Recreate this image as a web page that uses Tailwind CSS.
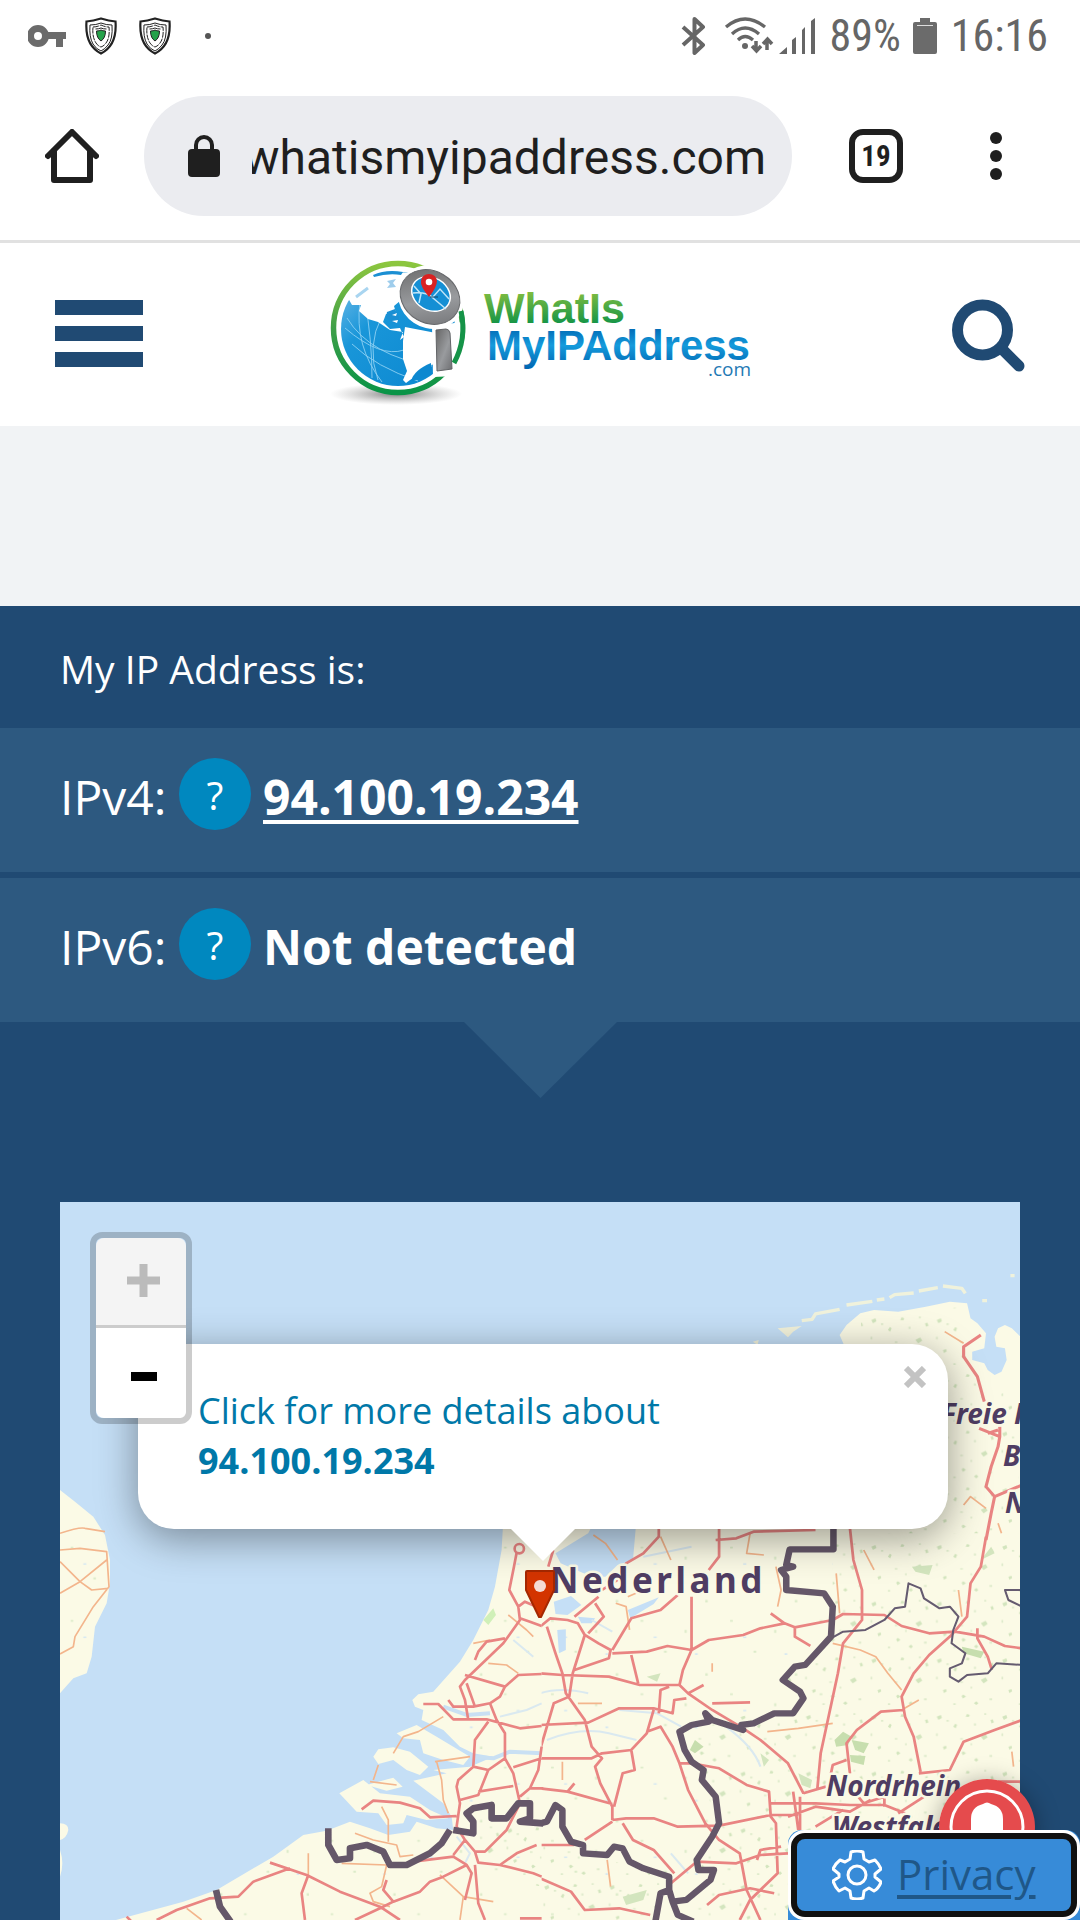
<!DOCTYPE html>
<html lang="en">
<head>
<meta charset="utf-8">
<meta name="viewport" content="width=device-width, initial-scale=1">
<title>What Is My IP Address</title>
<script src="https://cdn.jsdelivr.net/npm/@tailwindcss/browser@4"></script>
</head>
<body class="bg-white font-['Open_Sans',sans-serif]">
<div class="flex min-h-screen flex-col">

  <!-- Phone status bar -->
  <div class="flex h-[72px] items-center justify-between pr-8 pl-7 text-[#666666]">
    <div class="flex items-center">
      <svg class="mr-[18px] h-[24px] w-[39px]" viewBox="0 0 39 24" fill="#6b6b6b" aria-label="VPN key"><path fill-rule="evenodd" d="M10 1a11 11 0 1 1 0 22a11 11 0 1 1 0-22ZM10 8a4 4 0 1 0 0 8a4 4 0 1 0 0-8Z"/><path d="M18 8h20v7h-3v8h-7v-8H18Z"/></svg>
      <svg class="mr-[22px] h-[38px] w-[32px]" viewBox="0 0 32 38" fill="none" stroke="#222" aria-label="Shield"><path stroke-width="2.2" d="M1.500 4.500C7 4 11 3 16 1.500C21 3 25 4 30.500 4.500C31.500 18 29 30 16 36.500C3 30 .5 18 1.500 4.500Z"/><path stroke-width="1" d="M5 8q6 0 11-2q5 2 11 2q1 14-4 20q-3 4-7 6q-5-2-8-7q-4-7-3-19"/><path stroke-width="1" stroke-dasharray="6 1" d="M8 10q4 0 8-2q4 2 8 2q1 11-3 16q-2 3-5 4q-3-1-5-4q-4-6-3-16"/><path stroke-width="1" d="M10.500 12q3 0 5.500-1q2 1 5.500 1"/><path fill="#25a24a" d="M11.500 14q3 0 4.500-1q1.500 1 4.500 1q0 7-4.500 10q-4.500-3-4.500-10Z"/></svg>
      <svg class="mr-[34px] h-[38px] w-[32px]" viewBox="0 0 32 38" fill="none" stroke="#222" aria-label="Shield"><path stroke-width="2.2" d="M1.500 4.500C7 4 11 3 16 1.500C21 3 25 4 30.500 4.500C31.500 18 29 30 16 36.500C3 30 .5 18 1.500 4.500Z"/><path stroke-width="1" d="M5 8q6 0 11-2q5 2 11 2q1 14-4 20q-3 4-7 6q-5-2-8-7q-4-7-3-19"/><path stroke-width="1" stroke-dasharray="6 1" d="M8 10q4 0 8-2q4 2 8 2q1 11-3 16q-2 3-5 4q-3-1-5-4q-4-6-3-16"/><path stroke-width="1" d="M10.500 12q3 0 5.500-1q2 1 5.500 1"/><path fill="#25a24a" d="M11.500 14q3 0 4.500-1q1.500 1 4.500 1q0 7-4.500 10q-4.500-3-4.500-10Z"/></svg>
      <span class="size-[6px] rounded-full bg-[#555]"></span>
    </div>
    <div class="flex items-center font-['Roboto_Condensed','Liberation_Sans_Narrow',Roboto,sans-serif] text-[44px] leading-none">
      <svg class="mr-[18px] h-[38px] w-[25px]" viewBox="0 0 25 38" fill="none" stroke="currentColor" stroke-width="4" stroke-linejoin="round" aria-label="Bluetooth"><path d="M2 10L22 28L13.500 36V2L22 10L2 28"/></svg>
      <svg class="mr-[5px] h-[38px] w-[50px]" viewBox="0 0 50 38" fill="none" stroke="currentColor" stroke-width="3.300" aria-label="Wi-Fi"><path d="M2 10Q21-6 41 10M8 17Q21 5 35 17M14 23Q21 16 29 23"/><circle cx="21" cy="29" r="3" fill="currentColor" stroke="none"/><path stroke-width="3.500" d="M32 24v9M28 29l4.500 5l4.500-5M43 33V23M39 27l4.500-5l4.500 5"/></svg>
      <svg class="mr-[14px] h-[38px] w-[37px]" viewBox="0 0 37 38" fill="currentColor" aria-label="Signal"><path d="M0 37L8 30V37ZM13 23L17 20V37H13ZM23 13L26 10V37H23ZM32 4L36 1V37H32Z"/></svg>
      <span class="mr-3">89%</span>
      <svg class="mr-[14px] h-[36px] w-[24px]" viewBox="0 0 24 36" fill="#6b6b6b" aria-label="Battery"><path d="M7 0H17V4H22Q24 4 24 6V34Q24 36 22 36H2Q0 36 0 34V6Q0 4 2 4H7Z"/><path d="M4 7.500H20" stroke="#ddd"/></svg>
      <span>16:16</span>
    </div>
  </div>

  <!-- Browser toolbar -->
  <div class="flex h-[171px] items-start border-b-[3px] border-[#e1e1e1] pl-[45px] text-[#1f1f1f]">
    <button type="button" aria-label="Home" class="mt-[57px] mr-[45px]">
      <svg class="h-[54px] w-[54px]" viewBox="0 0 54 54" fill="none" stroke="currentColor" stroke-width="6" stroke-linecap="round" stroke-linejoin="round"><path d="M3 27L27 3L51 27"/><path d="M9 22V51H45V22"/></svg>
    </button>
    <div class="mt-6 flex h-[120px] min-w-0 flex-1 items-center rounded-full bg-[#ebecf0] pr-[26px] pl-11">
      <svg class="mr-8 h-[42px] w-8 shrink-0" viewBox="0 0 32 42" aria-label="Secure"><rect y="14" width="32" height="28" rx="4" fill="currentColor"/><path d="M8 16V10a8 8 0 0 1 16 0V16" fill="none" stroke="currentColor" stroke-width="4"/></svg>
      <input dir="rtl" type="text" aria-label="Address" value="whatismyipaddress.com" class="min-w-0 flex-1 bg-transparent pt-1 font-[Roboto,sans-serif] text-[48px] leading-[56px]">
    </div>
    <button type="button" aria-label="Open tabs" class="mt-[57px] ml-[57px] flex size-[54px] items-center justify-center rounded-[14px] border-[6px] border-[#1f1f1f] font-['Roboto_Condensed','Liberation_Sans_Narrow',Roboto,sans-serif] text-[29px] leading-none font-bold">19</button>
    <button type="button" aria-label="Menu" class="mt-[57px] mr-[57px] ml-[66px] flex h-[54px] w-[54px] items-center justify-center">
      <svg class="h-12 w-3" viewBox="0 0 12 48" fill="currentColor"><circle cx="6" cy="6" r="6"/><circle cx="6" cy="24" r="6"/><circle cx="6" cy="42" r="6"/></svg>
    </button>
  </div>

  <!-- Site header -->
  <header class="flex h-[183px] items-start justify-between px-[55px]">
    <button type="button" aria-label="Open navigation" class="mt-[57px] flex w-[88px] flex-col gap-[11px]">
      <span class="h-[15px] w-full bg-[#204a73]"></span><span class="h-[15px] w-full bg-[#204a73]"></span><span class="h-[15px] w-full bg-[#204a73]"></span>
    </button>
    <a href="#" aria-label="WhatIsMyIPAddress.com" class="mt-[7px] block">
      <svg class="h-[160px] w-[440px]" viewBox="0 0 440 160">
        <defs>
          <linearGradient id="ring" x1="0" y1="0" x2="0" y2="1"><stop offset="0" stop-color="#8cc63f"/><stop offset=".5" stop-color="#3f9f48"/><stop offset="1" stop-color="#0a9447"/></linearGradient>
          <linearGradient id="sea" x1="0" y1="0" x2="1" y2="1"><stop offset="0" stop-color="#7cc0ea"/><stop offset=".35" stop-color="#1996d9"/><stop offset="1" stop-color="#0a86cf"/></linearGradient>
          <linearGradient id="steel" x1="0" y1="0" x2="1" y2="1"><stop offset="0" stop-color="#666"/><stop offset=".55" stop-color="#999b9e"/><stop offset="1" stop-color="#6d6e71"/></linearGradient>
          <linearGradient id="green" gradientUnits="userSpaceOnUse" x1="0" y1="40" x2="0" y2="75"><stop offset="0" stop-color="#86bf40"/><stop offset="1" stop-color="#109347"/></linearGradient>
          <linearGradient id="blue" gradientUnits="userSpaceOnUse" x1="0" y1="77" x2="0" y2="118"><stop offset="0" stop-color="#0068b3"/><stop offset=".45" stop-color="#159bdc"/><stop offset="1" stop-color="#0067b2"/></linearGradient>
          <radialGradient id="shade"><stop offset="0" stop-color="#555" stop-opacity=".75"/><stop offset="1" stop-color="#999" stop-opacity="0"/></radialGradient>
        </defs>
        <ellipse cx="76" cy="144" rx="66" ry="11" fill="url(#shade)"/>
        <circle cx="78" cy="78" r="66" fill="#fff"/>
        <circle cx="78" cy="78" r="64.500" fill="none" stroke="url(#ring)" stroke-width="5.500"/>
        <circle cx="78" cy="79" r="57" fill="url(#sea)"/>
        <path fill="none" stroke="#8dd0f3" stroke-width=".9" d="M27 68Q50 106 112 116M40 52Q34 96 62 132M32 94Q56 117 98 131M45 51Q52 90 52 128M25 78Q60 108 84 100M62 66Q46 96 58 130"/>
        <path fill="#fff" d="M28 48Q35 26 66 21L98 24Q89 38 80 51L74 56L76 63L66 64L63 72L70 79L80 78L84 87L80 90L83 82L70 80L58 72L48 69L39 61L41 55L32 55Z"/>
        <path fill="#1b8fd3" d="M53 25Q66 19 83 22L81 25Q68 23 54 27Z"/>
        <path fill="#9fcdec" d="M67 31L76 29L73 33L76 37L67 38L70 34Z"/>
        <path fill="#1b8fd3" d="M67 62L75 59L79 68L75 74L66 68Z"/>
        <path fill="#fff" d="M72 65L77 63L76 66ZM72 71L78 70L77 73Z"/>
        <path fill="#fff" d="M85 77L111 82L127 86L124 112L111 115L101 123L90 130L86 133L83 130L87 121L83 109L83 91Z"/>
        <path fill="none" stroke="#a9d5f0" stroke-width="3" d="M36 47L48 38"/>
        <path fill="#0d88d0" d="M91 131Q94 120 111 113V124Q102 129 91 131Z"/>
        <ellipse cx="111" cy="47" rx="34" ry="31" transform="rotate(34 111 47)" fill="#fff"/>
        <path fill="#fff" d="M112 76L142 72L147 108L137 126L113 127Z"/>
        <path fill="none" stroke="#159348" stroke-width="5" d="M141 61Q147 89 134 113"/>
        <ellipse cx="110" cy="47" rx="31" ry="26" transform="rotate(30 110 47)" fill="url(#steel)" stroke="#66686b"/>
        <ellipse cx="111" cy="44" rx="21" ry="17" transform="rotate(30 111 44)" fill="#fff"/>
        <ellipse cx="111" cy="44" rx="19.500" ry="15.500" transform="rotate(30 111 44)" fill="#158fd4"/>
        <path fill="none" stroke="#bfe4f7" stroke-width="1.500" d="M93 43Q108 42 113 48L126 59M94 36L101 44L99 53M112 48L120 39L129 49"/>
        <path stroke="#124b70" stroke-width="1" d="M110 47H118"/>
        <path fill="#d92222" d="M109 47Q100 36 101 31A8 7 0 0 1 117 31Q117 37 109 47Z"/><circle cx="109" cy="32" r="3.300" fill="#fff"/>
        <path fill="url(#steel)" stroke="#626467" d="M116 80L126 79Q129 79 130 83L132 119L117 121Z"/>
        <text x="164" y="73" class="font-['Liberation_Sans',sans-serif] text-[43px] font-bold" fill="url(#green)">WhatIs</text>
        <text x="167" y="110" class="font-['Liberation_Sans',sans-serif] text-[42px] font-bold" fill="url(#blue)">MyIPAddress</text>
        <text x="388" y="126" class="font-['Open_Sans',sans-serif] text-[19px]" fill="#1f7ab5">.com</text>
      </svg>
    </a>
    <button type="button" aria-label="Search" class="mt-[56px] flex w-[88px] justify-end">
      <svg class="h-[74px] w-[73px]" viewBox="0 0 73 74" fill="none" stroke="#204a73" stroke-width="11"><circle cx="30.500" cy="31" r="25"/><path stroke-linecap="round" d="M50 50L67 67"/></svg>
    </button>
  </header>

  <div class="h-[180px] bg-[#f1f3f5]"></div>

  <main class="flex flex-1 flex-col bg-[#204a73] text-white">
    <h1 class="h-[122px] pl-[60px] text-[39px] leading-[126px]">My IP Address is:</h1>
    <div class="flex h-[144px] items-center bg-[#2d5980] px-[60px] pb-[6px] text-[48px] leading-[60px]">
      <span class="w-[119px] whitespace-nowrap">IPv4:</span>
      <button type="button" aria-label="About IPv4" class="mb-[6px] flex size-[72px] items-center justify-center rounded-full bg-[#0088bf] text-[39px] leading-none">?</button>
      <a href="#" class="ml-3 font-bold underline decoration-4 underline-offset-[5px]">94.100.19.234</a>
    </div>
    <div class="mt-1.5 flex h-[144px] items-center bg-[#2d5980] px-[60px] pb-[6px] text-[48px] leading-[60px]">
      <span class="w-[119px] whitespace-nowrap">IPv6:</span>
      <button type="button" aria-label="About IPv6" class="mb-[6px] flex size-[72px] items-center justify-center rounded-full bg-[#0088bf] text-[39px] leading-none">?</button>
      <span class="ml-3 font-bold">Not detected</span>
    </div>
    <svg class="mb-[104px] h-[76px] w-[153px] self-center" viewBox="0 0 153 76"><path d="M0 0H153L76.500 76Z" fill="#2d5980"/></svg>

    <!-- Map -->
    <section aria-label="Map" class="relative mx-[60px] min-h-[718px] flex-1 overflow-hidden bg-[#c5dff6]">
      <svg class="absolute inset-0 h-full w-full" viewBox="0 0 960 718" preserveAspectRatio="xMidYMin slice" fill="none" stroke-linejoin="round">
        <defs>
          <pattern id="woods" width="190" height="170" patternUnits="userSpaceOnUse"><path fill="#d3e5be" d="M12 20l12-5l3 9l-10 6ZM60 50l6-9l5 4l-4 10ZM100 12l8 3l-3 6l-9-1ZM140 80l14-8l6 10l-12 8ZM30 110l9-3l2 7l-8 5ZM84 128l5-4l8 6l-9 6ZM168 30l7-2l3 9l-7 3ZM120 150l7-6l6 6l-6 5Z"/><path fill="#dfebcc" d="M40 30h7v5h-7ZM80 84h8v5h-8ZM120 40h6v7h-6ZM165 135h8v6h-8ZM10 70h5v8h-5ZM60 150h7v5h-7ZM110 100h5v6h-5ZM150 10h6v5h-6Z"/></pattern>
          <pattern id="fields" width="260" height="220" patternUnits="userSpaceOnUse"><path fill="#dcebc9" d="M32 20h8v5h-8ZM160 50h6v9h-6ZM100 112h8v6h-8ZM220 180h7v7h-7Z"/><path fill="#d6e8f2" d="M70 70h9v4h-9ZM190 120h8v5h-8Z"/></pattern>
        </defs>

        <!-- East and south-east mainland -->
        <g transform="translate(480 338) scale(.3444 .3333)">
          <path fill="#fbfae6" d="M-5-60H1400V1150H-5Z"/>
          <path fill="url(#fields)" d="M0 0H850V500L400 600L520 850L400 1150H0Z"/>
          <path fill="url(#woods)" d="M850 0H1400V1150H400L520 850L410 580L760 480L700 420L850 290ZM0 900L370 1010V1150H0Z"/>
          <path fill="#c5dff6" d="M45 40L140-20L160-60H280L270 60L225 75L190 110L150 110L60 70ZM40 185L90 168L120 195L80 225L45 222ZM255 210L345 172L330 192L262 235ZM50 270L75 268V330L55 340ZM110 230L160 235L150 250L120 250Z"/>
          <path stroke="#dae9f0" stroke-width="6" d="M0 460Q60 440 140 460M230 510L340 520L410 560M20 600Q120 560 200 580L280 600M540 560Q620 620 640 680M150 240L210 275M300 50L440 20M380 940L430 1000"/>
          <path fill="#c7deae" d="M855 600L880 575L905 590L895 615L860 620ZM905 600L955 610L940 640L915 630ZM900 645L945 648L940 675L903 665ZM1225 320L1290 335L1280 355L1230 340ZM450 600L475 620L450 640L435 630Z"/>
          <path fill="#d3e5be" d="M750 700L790 720L785 745L760 735ZM640 640L665 660L650 680ZM240 1070L310 1050L300 1080L250 1095ZM1080 80L1140 75L1130 105L1090 95ZM1280 60L1310 20L1320 40ZM310 410L350 400L340 425Z"/>
          <g stroke="#f3b58c" stroke-width="5"><path d="M660 575L750 565L850 550M850 310L930 330L975 350L1010 400L1050 450M685 80L700 150L690 200M155-15L190 10L225 60M350-10L380 60M610-20L600 40L650 45M220 190L250 200L260 270M500 370V395M860 100L870 220M940 30L970 90M65 665V720M1370 635L1375 680M195 960L205 1040M110 490H180M255 170L300 150M1215 150L1225 230M1050 510L1100 480"/></g>
          <g stroke="#e98482" stroke-width="8"><path d="M900-35L910 60L935 150V240L880 310L865 400L840 520L815 640L805 750M1295-10L1280 80L1250 130L1240 230L1195 285L1130 345L1085 400L1050 470L1060 530L1085 590L1105 695M850 240L880 222L1000 225L1050 258L1130 280L1205 275L1290 290L1350 318L1400 325M1270 265V295L1300 350L1312 390M670 220L710 250L640 265L590 285L490 300L440 330L370 318L310 335L210 340M710 250L740 262V290L785 318M740 262L850 240M520-40V50L490 90M345-40V-10L300 40L250 70L240 110L180 150M510 0L570-5L620-25L800-30M440 170V330L415 390L405 435L430 460L500 510L590 565L640 600L720 670L765 760M430 460L475 435M500 490L610 487M0 400L65 405L200 410L290 435H405M265 345L285 430M20 260L45 340L65 400L75 460L130 540L150 620L180 655L160 680L175 730L210 800V840M0 260L30 235L80 240L110 250L130 285L95 400L85 470L40 490L20 560L0 630M130 285L170 310L205 330L200 355L100 390M210 330L265 235L350 210L400 165M170 170L100 230M160 190L185 230L140 280M0 555L140 548L230 505H330L385 520L390 480L425 475M345 520L350 450L375 440M330 510L310 580L265 630L180 640L150 655H0M265 630L275 690L240 700L215 800M310 575L350 560L385 620L405 670L440 670L520 685L600 735L665 755L670 830L685 850L690 1000L610 1080L580 1140M405 670L430 750L480 850L520 900L580 940L600 1050L640 1140M0 745L80 755L210 792M100 730L80 755M210 840L250 835H330L400 860L520 857L670 825H750M210 845L130 900M240 850L270 900L330 930L390 1000M0 915H100M0 1015L90 1055L130 1110L230 1105L320 1125M380 1030L455 965L570 970L640 945L720 940M485 1095L520 1065L610 1045L680 1060M630 960L640 930L700 920M670 790H800L900 795H1000L1060 820M735 755L750 870M755 770V870M765 760L830 740M720 830L800 800L900 815L960 780M800 860L880 810M900 700L890 610L920 570L990 515L1055 510M890 660L850 675L845 700M900 740L940 790L1000 770V800M1100 700L1190 690L1230 605L1320 570L1400 540M1330 725H1400M1040 820L1130 760"/></g>
          <path stroke="#655b70" stroke-width="6" d="M850 292L880 275L945 270L1000 240L1030 205L1060 200L1070 130L1105 145L1115 175L1160 205L1190 200L1215 230L1200 270L1195 310L1235 340L1225 370L1190 385V410L1215 425L1240 405L1300 400L1325 370L1400 375M1400 150H1350L1360 180L1400 200"/>
          <path stroke="#655769" stroke-width="19" d="M852-40V28H725L715 75L735 80L700 90L715 110V150L825 160L850 200L845 290L770 375L740 380L705 420L755 455L765 475L735 520H680L620 550L585 555L590 570L500 540L480 520L490 545L440 555L405 575L420 630L440 665L475 690L470 720L510 770L520 850L500 890L455 960L460 990H505L495 1020L425 1080L385 1085L400 1125L445 1145M0 850L20 845L45 795L65 810V860L90 905L125 915V940L195 945L215 920L240 925L260 965L300 985L375 1010V1050L350 1060L335 1145M375 1050L385 1085"/>
        </g>

        <!-- North Sea coasts, Zeeland and Flanders -->
        <g transform="translate(0 338) scale(.3333)">
          <path fill="#fbfae6" d="M0-150L45-115L100-70L135-15L150 60V130L140 190L105 260L95 350L80 400L40 415L0 460ZM0 850Q25 850 25 870Q20 895 0 900ZM0 930Q14 970 0 1010Z"/>
          <path fill="#fbfae6" d="M1445-60H1330L1325 30L1305 140L1285 210L1240 300L1200 365L1120 455L1075 463L1057 480L1065 500L1090 510L1085 540L1150 570L1200 620L1240 640L1300 650L1230 680L1120 690L1160 700L1060 722L1110 760L1150 790L1175 830L1180 870L1130 865L1070 845L1050 875L985 885L930 865L870 845L800 872L730 885L640 950L470 1050L370 1085L150 1145H1445Z"/>
          <path fill="#fbfae6" d="M1010 580L1070 555L1130 590L1180 620L1230 650L1210 675L1150 660L1090 640L1080 600L1030 595ZM940 650L955 628L1000 622L1050 635L1105 680L1080 705L1040 690L1000 660L955 672ZM920 735L1000 713L1028 740L980 752ZM838 760L910 720L960 760L1050 770L1110 810L1165 835L1100 840L1040 825L1030 850L980 855L955 820L890 815Z"/>
          <path fill="url(#fields)" d="M0-100L100-60L130 150L90 360L0 440ZM1330 0H1445V1140H300L730 900L1180 880L1220 420Z"/>
          <path fill="url(#woods)" d="M1250 850H1445V1040L1280 1000Z"/>
          <path fill="#d0f0b8" d="M1270 240L1300 205L1308 225L1285 255Z"/>
          <path stroke="#c9e0f3" stroke-width="12" d="M1230 650L1300 655L1350 635L1445 640M1150 500L1220 525L1290 520"/>
          <path stroke="#dae9f0" stroke-width="6" d="M1320 530L1400 510L1445 490M1190 890L1230 940L1215 970M1360 300L1420 350"/>
          <g stroke="#f3b58c" stroke-width="5"><path d="M0 30L60 25L140 35L147 140L100 200L45 290L40 320L0 342M0 65L60 125L95 150L145 145M60 125L140 60M0 160L60 125M0 -20Q60-40 75-35L135-25M1150 530L1075 575L1030 590L1000 640M955 675L940 720M930 725L1010 735M1125 665L1230 650M1130 665L1145 720L1150 780L1165 820M965 800L985 840V905M885 880L940 900L1010 915L1020 950L1060 945M745 940V1005M845 970L980 975L965 1040L930 1060L940 1085L990 1100M1285 370L1340 375L1375 400M380 1105L425 1140M1140 1005L1210 1070L1200 1140M1345 225L1400 270L1420 290M1240 310L1290 300M1210 1070L1300 1085"/></g>
          <g stroke="#e98482" stroke-width="8"><circle cx="1378" cy="26" r="14"/><path d="M1370 38L1362 80L1348 150L1375 200L1380 240L1330 310L1215 420L1200 440L1215 480L1225 540M1335 295L1280 305L1255 335L1245 360M1215 405L1335 440L1375 405L1445 402M1335 440L1320 470L1290 490L1240 500H1180L1165 480M1220 430L1245 500M1090 492H1135L1180 538H1280L1380 565L1445 558M1290 490L1310 540L1335 580V655L1360 700L1380 790L1340 870L1275 935H1245L1215 900L1180 945M1285 545L1245 600L1240 680L1195 720L1190 740L1200 790L1190 860L1215 900M1240 680L1285 690L1335 655M1285 690L1255 765L1200 780M1255 755L1360 738M1360 682L1445 655M905 808L940 782L1020 788L1080 805L1110 832L1190 828M1445 620L1435 690L1410 745H1450M1410 745L1380 770M1375 200L1395 185L1430 200M1380 235L1410 245L1445 258M1480 30L1465 80M1245 935L1255 968L1320 975L1420 1000L1445 1010M1320 975L1370 940L1430 915M630 968L740 1005L840 1055L960 1100L1020 1140M290 1140L350 1110L450 1075L535 1070L580 1025L690 985M745 1005L725 1060L735 1140M885 1140L960 1105L1000 1085L1080 1055L1110 1025L1150 1010L1220 975M980 1020L970 1050L1000 1085M1060 965L1180 950L1220 975L1235 1000L1215 1080M1245 975L1255 1090L1275 1140M200 1130L215 1145M1380 1135H1445"/></g>
          <path stroke="#655769" stroke-width="20" d="M805 865V915L830 960L870 955V925L920 915L970 935L990 975H1040L1110 940L1145 910L1170 870M1180 870L1240 880V845L1220 820L1240 805L1295 795V835H1340L1375 790H1410V835L1380 845L1450 850M468 1050L480 1100L512 1145"/>
        </g>

        <!-- Frisian coast -->
        <g transform="translate(480 -2) scale(.3444 .3333)">
          <path fill="#fbfae6" d="M1400 415L1370 385L1350 375L1330 385L1320 410L1325 440L1350 445L1355 480L1340 515L1320 525L1300 510L1290 490L1255 480V455L1290 445L1295 400L1270 370L1250 355L1240 310L1190 305L1120 320L1040 335L970 330L930 340L890 375L870 405L885 440L900 980H1400Z"/>
          <path fill="url(#woods)" d="M930 350L1230 320L1240 500L1290 600L1390 560V1000H1000Z"/>
          <path fill="#f3f3dc" d="M690 385L760 378L735 395L720 412ZM618 425L635 420L632 435Z"/>
          <path stroke="#f0f2dc" stroke-width="10" d="M760 362L790 358L800 342L870 328M890 315L965 304M978 300L1000 297M1015 293L1030 284L1085 279M1100 273L1155 263M1170 258L1225 265L1235 280M1284 302H1298M1366 227H1378"/>
          <path stroke="#f3b58c" stroke-width="5" d="M1175 395L1230 430M1230 915L1250 890L1295 925M1330 970L1340 1000"/>
          <path stroke="#e98482" stroke-width="9" d="M1280 405L1230 440V470L1270 530L1290 605M1275 685L1335 710L1330 740L1310 800L1295 860L1320 890L1310 940L1295 1020M1320 890L1400 855M1335 680V710M1300 700L1330 690"/>
        </g>

        <g fill="#4f3d63" stroke="#fbfae6" stroke-width="5" paint-order="stroke" class="font-['Noto_Sans',sans-serif] font-bold">
          <text x="490" y="391" class="text-[35px] tracking-widest">Nederland</text>
          <g class="text-[28px] italic">
            <text x="881" y="222">Freie Hansestadt</text>
            <text x="943" y="264">Bremen</text>
            <text x="945" y="311">Niedersachsen</text>
            <text x="766" y="594">Nordrhein-</text>
            <text x="772" y="635">Westfalen</text>
          </g>
        </g>
        <path fill="#d33400" stroke="#a52800" stroke-width="2" d="M466 370Q466 369 467 369H493Q494 369 494 370V388L481 415H479L466 388Z"/><circle cx="480" cy="384" r="6" fill="#f5dcd5"/>
      </svg>

      <!-- Popup -->
      <div class="absolute top-[142px] right-[72px] left-[78px] flex h-[185px] flex-col rounded-[36px] bg-white pt-[42px] pl-[60px] text-[36px] leading-[50px] text-[#0078a8] shadow-[0_9px_42px_rgba(0,0,0,0.4)]">
        <a href="#" class="block">Click for more details about<br><strong>94.100.19.234</strong></a>
        <button type="button" aria-label="Close" class="absolute top-[22px] right-[22px]">
          <svg class="size-[22px]" viewBox="0 0 22 22" stroke="#c3c3c3" stroke-width="6"><path d="M2 2L20 20M20 2L2 20"/></svg>
        </button>
        <svg class="absolute top-full left-1/2 -ml-8 h-8 w-16" viewBox="0 0 64 32"><path d="M0 0H64L32 32Z" fill="#fff"/></svg>
      </div>

      <!-- Zoom controls -->
      <div class="absolute top-[30px] left-[30px] flex w-[102px] flex-col overflow-hidden rounded-[12px] border-[6px] border-black/20 bg-clip-padding">
        <button type="button" aria-label="Zoom in" disabled class="flex h-[90px] items-center justify-center rounded-t-[8px] border-b-[3px] border-[#ccc] bg-[#f4f4f4] pb-[3px] pl-1">
          <svg class="size-[33px]" viewBox="0 0 33 33" stroke="#bbb" stroke-width="8"><path d="M0 16.500H33M16.500 0V33"/></svg>
        </button>
        <button type="button" aria-label="Zoom out" class="flex h-[90px] items-center justify-center rounded-b-[8px] bg-white pt-1.5 pl-1.5">
          <svg class="h-[9px] w-[26px]" viewBox="0 0 26 9"><path d="M0 0H26V9H0Z"/></svg>
        </button>
      </div>
    </section>
  </main>
</div>

<!-- Floating actions -->
<button type="button" aria-label="Notifications" class="fixed right-[45px] bottom-[45px] size-24 rounded-full shadow-[0_3px_24px_rgba(0,0,0,0.35)]">
  <svg viewBox="0 0 96 96"><circle cx="48" cy="48" r="48" fill="#e54b4d"/><circle cx="48" cy="48" r="36" fill="none" stroke="#fff" stroke-width="3"/><path fill="#fff" d="M32 60V40Q32 28 44 25Q48 22 52 25Q64 28 64 40V60Z"/></svg>
</button>
<div class="fixed right-0 bottom-0 flex h-[90px] w-[292px] rounded-t-[14px] bg-[#378bd8]">
  <div class="flex flex-1 rounded-[16px] bg-white p-[3px]">
    <div class="flex flex-1 items-center rounded-[14px] border-[6px] border-[#111] bg-[#378bd8] pl-[35px]">
      <svg class="mr-[15px] size-[50px]" viewBox="0 0 50 50" fill="none" stroke="#fff" stroke-width="3" stroke-linejoin="round"><circle cx="25" cy="25" r="9"/><path d="M19 2Q25 0 31 2L32 9L37 12L43 10Q47 14 49 19L43 24V27L49 32Q47 38 42 41L37 38L32 41L31 48Q25 50 19 48L18 41L13 38L7 41Q3 37 1 31L7 27V24L1 19Q3 14 8 10L13 12L18 9Z"/></svg>
      <a href="#" class="pb-[2px] text-[42px] leading-[60px] text-[#1f5788] underline decoration-[4px] underline-offset-[5px]">Privacy</a>
    </div>
  </div>
</div>
</body>
</html>
